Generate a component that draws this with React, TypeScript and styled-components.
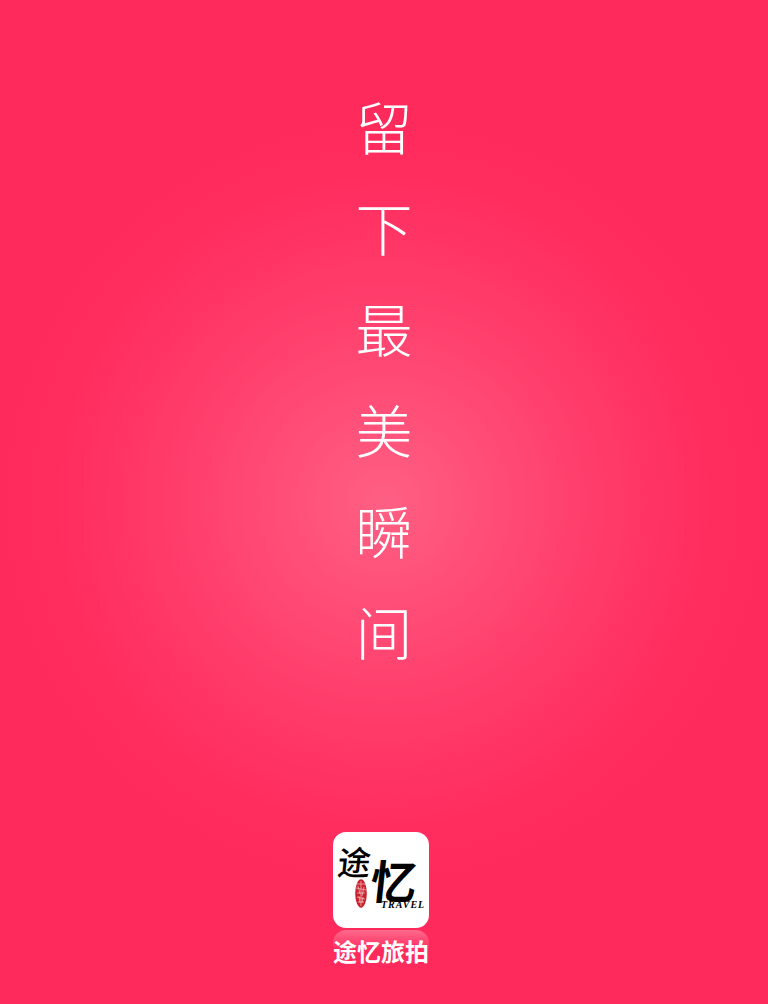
import styled, { createGlobalStyle } from "styled-components";

const slogan = ["留", "下", "最", "美", "瞬", "间"];

const GlobalStyle = createGlobalStyle`
  html, body {
    margin: 0;
    padding: 0;
  }
`;

function Logo() {
  return (
    <LogoBox>
      <Brush>途</Brush>
      <BrushBig>忆</BrushBig>
      <Seal viewBox="0 0 12 29">
        <ellipse cx="6" cy="14.5" rx="5.8" ry="14.2" fill="#c8202c" />
        <path
          d="M2 5h8M1 9l10 2M2 14h8M2 18l8 2M3 23h6M6 2v25M3 7l2 8M9 8l-2 9M4 17l1 7M8 18l-1 6"
          stroke="#f0b8b8"
          strokeWidth="0.8"
          fill="none"
        />
      </Seal>
      <Travel>TRAVEL</Travel>
    </LogoBox>
  );
}

function App() {
  return (
    <>
      <GlobalStyle />
      <Page>
        <Slogan>
          {slogan.map((char) => (
            <Char key={char}>{char}</Char>
          ))}
        </Slogan>
        <Brand>
          <Icon>
            <Logo />
          </Icon>
          <Name>途忆旅拍</Name>
        </Brand>
      </Page>
    </>
  );
}
export default App;

const Page = styled.div`
  width: 768px;
  height: 1004px;
  overflow: hidden;
  display: flex;
  flex-direction: column;
  align-items: center;
  justify-content: space-between;
  padding: 75px 0 35px;
  box-sizing: border-box;
  background: radial-gradient(
    circle 385px at 384px 502px,
    #ff5f84 0%,
    #ff4f78 25%,
    #ff3c6b 55%,
    #ff2d5e 85%,
    #ff2a5c 100%
  );
  font-family: "Noto Sans CJK SC", "Liberation Sans", sans-serif;
`;

const Slogan = styled.div`
  display: flex;
  flex-direction: column;
  align-items: center;
`;

const Char = styled.div`
  font-size: 57px;
  font-weight: 300;
  line-height: 101px;
  height: 101px;
  color: #fff;
`;

const Brand = styled.div`
  display: flex;
  flex-direction: column;
  align-items: center;
  width: 96px;
  margin-right: 6px;
`;

const Icon = styled.div`
  position: relative;
  width: 96px;
  height: 96px;
  border-radius: 13px;
  background: #fff;

  &::after {
    content: "";
    position: absolute;
    left: 0;
    right: 0;
    top: 98px;
    height: 20px;
    border-top-left-radius: 13px;
    border-top-right-radius: 13px;
    background: linear-gradient(
      rgba(255, 255, 255, 0.3),
      rgba(255, 255, 255, 0)
    );
  }
`;

const LogoBox = styled.div`
  position: relative;
  width: 96px;
  height: 96px;
  overflow: hidden;
  border-radius: 13px;
  color: #000;
`;

const Brush = styled.span`
  position: absolute;
  left: 5px;
  top: 10px;
  font-size: 33px;
  line-height: 38px;
  font-weight: 500;
  transform: skewX(-6deg);
`;

const BrushBig = styled.span`
  position: absolute;
  left: 38px;
  top: 21px;
  font-size: 46px;
  line-height: 52px;
  font-weight: 700;
  transform: skewX(-6deg);
`;

const Seal = styled.svg`
  position: absolute;
  left: 22px;
  top: 47px;
  width: 12px;
  height: 29px;
`;

const Travel = styled.span`
  position: absolute;
  left: 47px;
  top: 67px;
  padding: 0 1px;
  font-family: "Liberation Serif", serif;
  font-style: italic;
  font-weight: 700;
  font-size: 10px;
  line-height: 11px;
  letter-spacing: 1px;
`;

const Name = styled.div`
  margin-top: 5px;
  font-size: 24px;
  font-weight: 700;
  line-height: 36px;
  color: #fff;
  white-space: nowrap;
  position: relative;
`;
